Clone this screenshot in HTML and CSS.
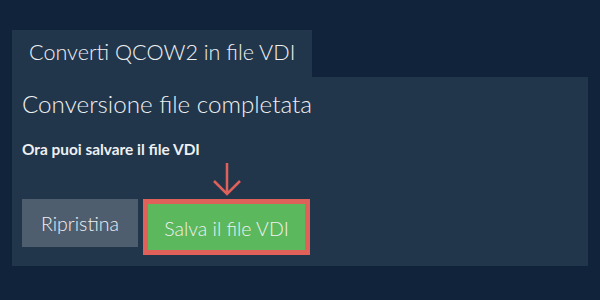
FILE: index.html
```html
<!DOCTYPE html>
<html lang="it">
<head>
  <meta charset="UTF-8">
  <title>Converti QCOW2 in file VDI</title>
  <link rel="stylesheet" href="styles.css">
</head>
<body>
  <div class="wrap">
    <div class="tab">Converti QCOW2 in file VDI</div>
    <div class="panel">
      <h2>Conversione file completata</h2>
      <p class="note">Ora puoi salvare il file VDI</p>
      <div class="actions">
        <button class="btn btn-reset">Ripristina</button>
        <div class="save-box">
          <svg class="arrow" width="30" height="34" viewBox="0 0 30 34">
            <path d="M15 1 V32 M2 19 L15 32 L28 19" fill="none" stroke="#e0605a" stroke-width="2.5"/>
          </svg>
          <button class="btn btn-save">Salva il file VDI</button>
        </div>
      </div>
    </div>
  </div>
</body>
</html>
```

FILE: styles.css
```css
body {
  margin: 0;
  background: #10233a;
  font-family: Lato, "Open Sans", sans-serif;
  color: #eef0f2;
}
.wrap {
  padding: 30px 12px 34px;
}
.tab {
  display: inline-block;
  background: #22364b;
  height: 47px;
  line-height: 45px;
  padding: 0 17px;
  font-size: 21.6px;
  font-weight: 300;
}
.panel {
  background: #22364b;
  height: 189px;
  padding: 0 10px;
  box-sizing: border-box;
}
h2 {
  margin: 0;
  padding-top: 10px;
  font-size: 24.2px;
  font-weight: 300;
  line-height: 34px;
}
.note {
  margin: 18px 0 0;
  font-size: 15.4px;
  font-weight: 700;
  line-height: 20px;
}
.actions {
  display: flex;
  align-items: flex-start;
  gap: 5px;
  margin-top: 40px;
}
.btn {
  border: none;
  font-family: inherit;
  color: #eef0f2;
  font-size: 19.5px;
  font-weight: 300;
  padding: 0;
}
.btn-reset {
  background: #4f5e6e;
  width: 116px;
  height: 48px;
}
.save-box {
  position: relative;
}
.btn-save {
  background: #5cb85c;
  width: 167px;
  height: 56px;
  border: 5px solid #e0605a;
  padding-top: 3px;
}
.arrow {
  position: absolute;
  left: 69px;
  top: -37px;
}
```
